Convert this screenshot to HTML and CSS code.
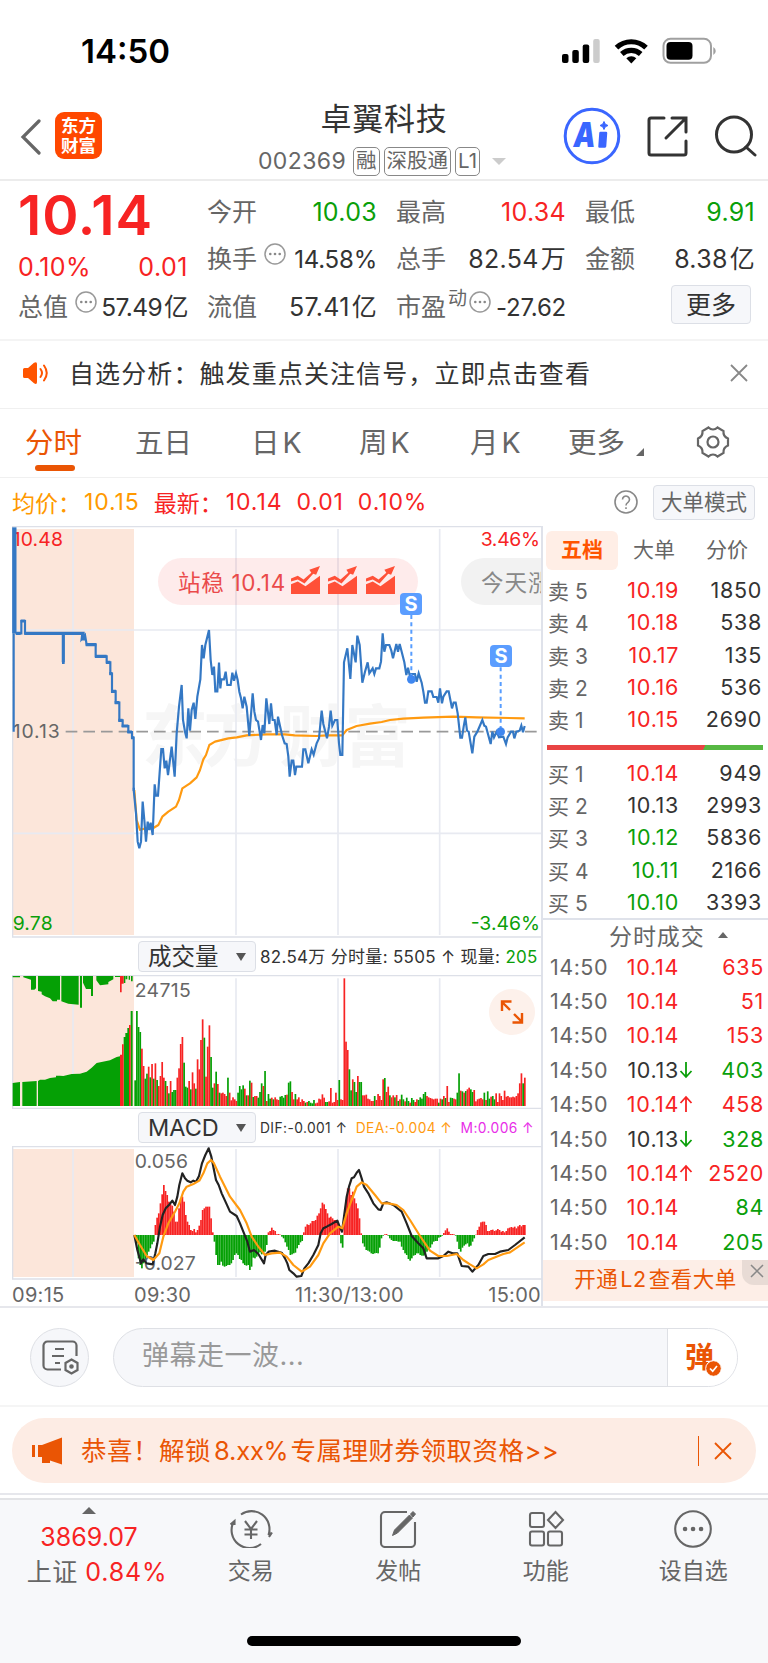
FILE: index.html
```html
<!DOCTYPE html>
<html lang="zh-CN">
<head>
    <meta charset="UTF-8">
    <meta name="viewport" content="width=device-width, initial-scale=1.0">
    <title>卓翼科技 002369</title>
    <link rel="stylesheet" href="styles.css">
</head>
<body>
    <div class="status-bar">
        <span class="clock">14:50</span>
        <svg class="status-icons" width="156" height="28" viewBox="561 37 156 28">
            <rect x="562" y="54" width="6.500" height="9" rx="2"/>
            <rect x="572.300" y="50" width="6.500" height="13" rx="2"/>
            <rect x="582.700" y="44.500" width="6.500" height="18.500" rx="2"/>
            <rect x="593.200" y="39" width="6.500" height="24" rx="2" fill="#ccc"/>
            <g fill="none" stroke="#000" stroke-width="5.200">
                <path d="M616.500 47.600a21.500 21.500 0 0 1 29.500 0"/>
                <path d="M621.800 54a14 14 0 0 1 18.900 0"/>
            </g>
            <path d="M626.300 58.200a7.500 7.500 0 0 1 10 0l-5 5.300z"/>
            <rect x="663.500" y="38.800" width="47.500" height="24" rx="7" fill="none" stroke="#a0a0a0" stroke-width="2"/>
            <rect x="666.500" y="42" width="26" height="17.800" rx="4"/>
            <path d="M713.300 47a4.500 4.500 0 0 1 0 8z" fill="#a0a0a0"/>
        </svg>
    </div>

    <header class="top-bar">
        <svg class="back" width="22" height="36" viewBox="0 0 22 36"><path d="M19 2 3 18l16 16"/></svg>
        <div class="logo"><span>东方</span><span>财富</span></div>
        <div class="stock">
            <h1>卓翼科技</h1>
            <div class="stock-code">
                <span class="code">002369</span>
                <span class="tag">融</span>
                <span class="tag">深股通</span>
                <span class="tag">L1</span>
                <i class="caret"></i>
            </div>
        </div>
        <div class="top-actions">
            <svg width="58" height="58" viewBox="0 0 58 58">
                <circle cx="29" cy="29" r="26.800" fill="none" stroke="#3a66ff" stroke-width="3"/>
                <text class="ai" x="10.500" y="40" textLength="22" lengthAdjust="spacingAndGlyphs">A</text>
                <path d="M37.500 26h5.500l-1 13.500h-5.500z" fill="#3a66ff" stroke="#3a66ff" stroke-width="2.500" stroke-linejoin="round"/>
                <path d="M41 14.500l1.300 2.700 2.700 1.300-2.700 1.300-1.300 2.700-1.300-2.700-2.700-1.300 2.700-1.300z" fill="#3a66ff" stroke="#3a66ff"/>
            </svg>
            <svg class="share" width="42" height="42" viewBox="0 0 42 42"><path d="M17 3H4a2 2 0 0 0-2 2v33a2 2 0 0 0 2 2h33a2 2 0 0 0 2-2V26M25 3h14v14M39 3 19 23"/></svg>
            <svg class="search" width="42" height="42" viewBox="0 0 42 42"><circle cx="19" cy="19.500" r="17.500"/><path d="m31 32 9 8"/></svg>
        </div>
    </header>

    <section class="quote">
        <div class="quote-main">
            <div class="last red">10.14</div>
            <div class="cell change red"><span>0.10%</span><b>0.01</b></div>
            <div class="cell"><span>总值</span><svg class="info" viewBox="0 0 22 22"><use href="#dots"/></svg><b>57.49<em>亿</em></b></div>
        </div>
        <div class="quote-col">
            <div class="cell"><span>今开</span><b class="green">10.03</b></div>
            <div class="cell"><span>换手</span><svg class="info" viewBox="0 0 22 22"><use href="#dots"/></svg><b class="tight">14.58%</b></div>
            <div class="cell"><span>流值</span><b>57.41<em>亿</em></b></div>
        </div>
        <div class="quote-col">
            <div class="cell"><span>最高</span><b class="red">10.34</b></div>
            <div class="cell"><span>总手</span><b>82.54<em>万</em></b></div>
            <div class="cell pe"><span>市盈</span><sup>动</sup><svg class="info" viewBox="0 0 22 22"><use href="#dots"/></svg><b class="tight">-27.62</b></div>
        </div>
        <div class="quote-col">
            <div class="cell"><span>最低</span><b class="green">9.91</b></div>
            <div class="cell"><span>金额</span><b>8.38<em>亿</em></b></div>
            <div class="cell"><button class="more">更多</button></div>
        </div>
    </section>

    <div class="signal">
        <svg width="28" height="24" viewBox="0 0 28 24">
            <path d="M1 8.500Q1 7 2.500 7H6l6-5.200Q15 0 15 3v18q0 3-3 1.200L6 17H2.500Q1 17 1 15.500z" fill="#ff5500"/>
            <path d="M18.500 8q3 4 0 8M22 4.500q5.500 7.500 0 15" fill="none" stroke="#ff5500" stroke-width="2" stroke-linecap="round"/>
        </svg>
        <p>自选分析：触发重点关注信号，立即点击查看</p>
        <svg class="close" width="18" height="18" viewBox="0 0 18 18"><path d="m1 1 16 16M17 1 1 17"/></svg>
    </div>

    <nav class="periods">
        <a class="on">分时</a>
        <a>五日</a>
        <a>日<i>K</i></a>
        <a>周<i>K</i></a>
        <a>月<i>K</i></a>
        <a class="period-more">更多</a>
        <svg width="34" height="34" viewBox="0 0 34 34">
            <path d="M12.500 2.500q2 2 4.500 2t4.500-2l6 3.500q-.6 5.500 4.500 7.500v7q-5 2-4.500 7.500l-6 3.500q-2-2-4.500-2t-4.500 2l-6-3.500q.5-5.500-4.500-7.500v-7q5-2 4.500-7.500z"/>
            <circle cx="17" cy="17" r="5.500"/>
        </svg>
    </nav>

    <div class="avg-line">
        <span class="orange">均价：</span><span class="orange num">10.15</span>
        <span class="red">最新：</span><span class="red num">10.14</span><span class="red num">0.01</span><span class="red num">0.10%</span>
        <svg class="help" width="24" height="24" viewBox="0 0 24 24"><circle cx="12" cy="12" r="11"/><path d="M8.500 9.500a3.500 3.500 0 1 1 5.500 2.900q-2 1.300-2 3"/><path d="M12 17.300v1.800"/></svg>
        <button class="mode">大单模式</button>
    </div>

    <main class="board">
        <div class="charts">
            <div class="price-chart">
                <svg width="530" height="412" viewBox="36 18 1590 1236">
                    <rect class="auction" x="38" y="27" width="364" height="1218"/>
                    <text class="watermark" x="425" y="722" textLength="385">东方</text>
                    <text class="watermark" x="838" y="722" textLength="395">财富</text>
                    <path class="grid" d="M219 27V1245M708 27V1245M1014 27V1245M1319 27V1245M38 330H1625M38 940H1625"/>
                    <path class="frame" d="M36 20H1626M38 20V1252M36 1251H1626"/>
                    <path class="base" d="M197 635H1615"/>
                    <text class="axis red" x="38" y="77" textLength="151">10.48</text>
                    <text class="axis" x="38" y="654" textLength="141">10.13</text>
                    <text class="axis green" x="38" y="1229" textLength="120">9.78</text>
                    <text class="axis red" x="1442" y="77" textLength="178">3.46%</text>
                    <text class="axis green" x="1412" y="1229" textLength="208">-3.46%</text>
                    <path class="avg" d="M403 810L410 900 420 930 437 925 460 924 475 915 487 890 505 875 528 860 537 840 547 805 570 790 590 772 600 750 610 718 618 705 628 675 645 665 685 655 710 652 740 646 800 643 854 643 884 646 950 648 980 646 1027 646 1040 630 1070 618 1110 611 1145 606 1170 600 1210 596 1270 593 1360 590 1430 592 1574 595"/>
                    <path class="price" d="M41 340V635M46 340H64V303H75V340H247L245 357 255 345 260 374H287V409H320V427H331V461H336V514H347V548H358V601H368V618H385V636H396V653H401V808L408 880 413 965 418 985 423 965 428 845 433 900 438 965 443 905 448 930 452 908 458 945 464 793 468 827 474 827 484 687 489 687 494 745 499 722 504 765 515 680 524 770 530 640 537 560 545 495 549 600 555 635 560 655 565 565 570 632 575 570 581 548 586 597 592 530 601 478 606 375 611 415 616 375 627 330 632 420 637 465 642 440 646 514 652 514 657 428 661 505 664 478 672 478 677 455 682 495 692 495 697 458 702 482 708 460 713 480 718 515 723 535 728 565 733 530 740 560 748 648 758 520 763 575 768 600 774 605 783 660 788 615 793 640 799 535 808 612 813 550 818 600 824 600 830 645 834 590 840 618 846 645 854 670 860 672 865 710 869 770 875 722 880 722 885 765 889 740 906 740 910 688 916 688 925 730 935 688 941 704 950 670 957 655 965 572 970 612 981 655 987 620 992 572 997 617 1005 600 1012 600 1017 670 1021 705 1027 705 1032 427 1042 385 1051 477 1057 375 1067 427 1072 347 1079 375 1087 488 1095 455 1103 427 1108 460 1118 445 1123 462 1128 445 1138 445 1143 425 1148 340 1153 395 1158 375 1168 375 1174 392 1179 415 1189 372 1194 395 1199 372 1205 395 1213 427 1219 465 1224 443 1230 470 1234 462 1245 462 1250 485 1256 460 1265 488 1270 515 1275 548 1280 548 1285 514 1295 514 1300 531 1310 531 1315 548 1320 505 1326 550 1330 530 1340 514 1346 514 1356 565 1361 548 1367 548 1373 580 1381 653 1386 653 1391 620 1396 592 1401 632 1406 635 1417 700 1423 650 1432 635 1447 600 1453 617 1458 620 1472 672 1477 635 1482 652 1490 635 1497 652 1510 650 1518 672 1523 652 1533 635 1539 635 1543 655 1549 635 1559 632 1564 617 1569 637 1574 618"/>
                    <path class="steps" d="M48 340H62M62 303H76M73 340H254M244 357H256M257 374H289M285 409H320M318 427H331M328 461H337M333 514H348M344 548H358M355 601H368M365 618H385M382 636H396M393 653H401M398 808H405M190 340V427M186 427H194"/>
                    <path class="opening" d="M43 22V340"/>
                    <g class="sell">
                        <path d="M1234 285V478M1502 442V635"/>
                        <circle cx="1234" cy="478" r="13"/>
                        <circle cx="1502" cy="635" r="13"/>
                    </g>
                </svg>
                <div class="bubble hot">站稳 10.14
                    <svg viewBox="0 0 30 30"><use href="#rise"/></svg><svg viewBox="0 0 30 30"><use href="#rise"/></svg><svg viewBox="0 0 30 30"><use href="#rise"/></svg>
                </div>
                <div class="bubble next">今天涨</div>
                <span class="mark mark-a">S</span>
                <span class="mark mark-b">S</span>
            </div>

            <div class="sub-head">
                <button>成交量<i></i></button>
                <p class="vol-text">82.54万 分时量: 5505 ↑ 现量: <span class="green">205</span></p>
            </div>
            <div class="sub-chart volume">
                <svg width="530" height="134" viewBox="36 134 1590 402">
                    <rect class="auction" x="38" y="137" width="364" height="390"/>
                    <path class="grid" d="M219 137V527M708 144V527M1014 144V527M1319 144V527"/>
                    <path class="frame" d="M36 136H1626M38 136V534M36 534H1626"/>
                    <path class="fill-green" d="M38 527V458L60 455V527zM67 527V455L110 452V527zM114 527V452L120 448 135 448 150 443 168 441V436H179L190 437 215 431 240 430 260 424 275 412 290 398 330 390 350 380 360 378V527zM371 527V320H376V308H382V293H387V527zM392 527V242H398V527z"/>
                    <path class="fill-green" d="M38 137H60V141H38zM70 137H108V174L103 178H93V148L70 141zM114 137H180V208H171V213H158L150 204 135 198 125 192V184L114 182zM184 137H236V223L205 220 184 213zM240 137H246V232H240zM249 137H279V197H273V176H258L249 157zM289 137H340V147L325 155V162L300 165 289 150zM345 137H360V140H345zM371 137H376V158H371zM377 137H382V147H377zM386 137H390V148H386zM393 137H398V153H393z"/>
                    <path class="fill-red" d="M360 527V373H366V342H371V527zM387 527V284H392V527zM360 137H371V160H365V186H360z"/>
                    <g id="volume"></g>
                    <text class="axis" x="404" y="200" textLength="168">24715</text>
                </svg>
                <svg class="expand" viewBox="0 0 46 46"><circle cx="23" cy="23" r="23"/><path d="M21 21 13 13M13 22v-9.500h9.500M25 25l8 8M33 24v9.500h-9.500"/></svg>
            </div>

            <div class="sub-head macd-head">
                <button>MACD<i></i></button>
                <p class="macd-text"><span>DIF:-0.001 ↑</span><span class="dea">DEA:-0.004 ↑</span><span class="m">M:0.006 ↑</span></p>
            </div>
            <div class="sub-chart">
                <svg width="530" height="134" viewBox="36 648 1590 402">
                    <rect class="auction" x="38" y="657" width="364" height="384"/>
                    <path class="grid" d="M219 657V1041M708 657V1041M1014 657V1041M1319 657V1041"/>
                    <path class="frame" d="M36 650H1626M38 650V1047M36 1047H1626"/>
                    <text class="axis" x="404" y="714" textLength="160">0.056</text>
                    <g id="macd"></g>
                    <text class="axis" x="404" y="1021" textLength="183">-0.027</text>
                    <path class="dif" d="M403 915L412 960 423 1000 430 988 440 1000 458 1003 466 970 472 940 480 890 488 855 497 835 507 825 517 812 525 825 532 800 538 765 547 730 555 745 562 752 572 757 580 752 588 755 597 738 606 700 616 675 626 655 634 680 640 710 648 750 656 765 665 790 675 812 690 845 710 858 720 880 732 910 742 935 750 965 762 960 775 972 792 1000 797 975 806 965 825 962 845 968 855 985 862 1000 868 1020 880 1030 890 1040 904 1038 913 1015 925 1000 940 975 955 945 962 910 970 895 980 890 995 882 1012 872 1018 888 1026 905 1032 860 1040 800 1047 770 1055 745 1062 742 1070 728 1077 720 1085 745 1092 770 1105 790 1120 820 1135 838 1142 840 1150 820 1160 817 1180 825 1205 845 1220 880 1235 918 1255 940 1270 955 1280 985 1315 985 1330 978 1345 965 1358 970 1372 970 1385 1008 1405 1010 1417 1025 1435 1005 1450 978 1465 972 1485 972 1500 965 1525 960 1545 945 1574 922"/>
                    <path class="avg" d="M403 915L420 945 440 978 460 990 478 970 490 920 505 880 525 845 538 820 550 785 560 770 580 762 598 752 610 730 622 700 633 690 642 700 660 740 690 800 720 840 740 880 755 920 775 950 795 975 815 970 840 968 860 980 880 1005 905 1025 930 1010 955 975 970 940 990 910 1015 890 1027 895 1040 850 1055 810 1070 770 1085 757 1100 765 1125 795 1145 820 1165 820 1190 825 1210 840 1230 870 1260 918 1290 962 1315 978 1340 978 1370 972 1390 990 1410 1003 1430 1015 1450 1003 1465 990 1510 972 1530 967 1574 937"/>
                </svg>
            </div>
            <div class="times"><span>09:15</span><span>09:30</span><span>11:30/13:00</span><span>15:00</span></div>
        </div>

        <aside class="depth">
            <div class="depth-tabs"><b>五档</b><span>大单</span><span>分价</span></div>
            <div class="levels">
                <div class="row"><span>卖 5</span><b class="red">10.19</b><em>1850</em></div>
                <div class="row"><span>卖 4</span><b class="red">10.18</b><em>538</em></div>
                <div class="row"><span>卖 3</span><b class="red">10.17</b><em>135</em></div>
                <div class="row"><span>卖 2</span><b class="red">10.16</b><em>536</em></div>
                <div class="row"><span>卖 1</span><b class="red">10.15</b><em>2690</em></div>
            </div>
            <div class="ratio"></div>
            <div class="levels buy">
                <div class="row"><span>买 1</span><b class="red">10.14</b><em>949</em></div>
                <div class="row"><span>买 2</span><b>10.13</b><em>2993</em></div>
                <div class="row"><span>买 3</span><b class="green">10.12</b><em>5836</em></div>
                <div class="row"><span>买 4</span><b class="green">10.11</b><em>2166</em></div>
                <div class="row"><span>买 5</span><b class="green">10.10</b><em>3393</em></div>
            </div>
            <h2>分时成交<i></i></h2>
            <div class="trades">
                <div class="row"><span>14:50</span><b class="red">10.14</b><em class="red">635</em></div>
                <div class="row"><span>14:50</span><b class="red">10.14</b><em class="red">51</em></div>
                <div class="row"><span>14:50</span><b class="red">10.14</b><em class="red">153</em></div>
                <div class="row"><span>14:50</span><b>10.13</b><svg class="arrow green" viewBox="0 0 14 18"><use href="#down"/></svg><em class="green">403</em></div>
                <div class="row"><span>14:50</span><b class="red">10.14</b><svg class="arrow red" viewBox="0 0 14 18"><use href="#up"/></svg><em class="red">458</em></div>
                <div class="row"><span>14:50</span><b>10.13</b><svg class="arrow green" viewBox="0 0 14 18"><use href="#down"/></svg><em class="green">328</em></div>
                <div class="row"><span>14:50</span><b class="red">10.14</b><svg class="arrow red" viewBox="0 0 14 18"><use href="#up"/></svg><em class="red">2520</em></div>
                <div class="row"><span>14:50</span><b class="red">10.14</b><em class="green">84</em></div>
                <div class="row"><span>14:50</span><b class="red">10.14</b><em class="green">205</em></div>
            </div>
            <div class="l2">开通<i>L2</i>查看大单<span class="l2-close"><svg width="14" height="14" viewBox="0 0 14 14"><path d="m1 1 12 12M13 1 1 13"/></svg></span></div>
        </aside>
    </main>

    <div class="comment">
        <div class="comment-set">
            <svg width="38" height="36" viewBox="0 0 38 36">
                <path d="M20 30.500H6.500a4 4 0 0 1-4-4V6.500a4 4 0 0 1 4-4h25a4 4 0 0 1 4 4V17M14 10h9M11 17h12M14 24h5"/>
                <path d="m30.500 20.500 6 3.500v7l-6 3.500-6-3.500v-7z"/>
                <circle cx="30.500" cy="27.500" r="1.200"/>
            </svg>
        </div>
        <div class="comment-box">
            <span class="placeholder">弹幕走一波...</span>
            <div class="danmu"><b>弹</b><svg width="17" height="17" viewBox="-1 -1 17 17"><circle cx="7.500" cy="7.500" r="7.800" stroke="#fff"/><path d="m4 7.500 2.700 2.700L11 5"/></svg></div>
        </div>
    </div>

    <div class="promo-wrap">
        <div class="promo">
            <svg width="32" height="28" viewBox="0 0 32 28"><path d="M0 8h3v12H0zM6 8h4L30 0.500V27.500L18 23.500V26H10V20H6z"/></svg>
            <p>恭喜！解锁<i>8.xx%</i>专属理财券领取资格&gt;&gt;</p>
            <svg class="promo-close" width="18" height="18" viewBox="0 0 18 18"><path d="m1 1 16 16M17 1 1 17"/></svg>
        </div>
    </div>

    <footer class="bottom-nav">
        <div class="index">
            <i></i>
            <b class="red">3869.07</b>
            <span>上证 <em class="red">0.84%</em></span>
        </div>
        <div class="nav-item">
            <svg viewBox="0 0 44 38"><path d="M12 4.500A18 18 0 0 1 39.500 25M40.500 25.500v-4M40 27l3-4.500M32 34A18 18 0 0 1 4.500 12M1.500 14.500l4-3.500v4M16 11l6 8 6-8M22 19v10M15.500 19.500h13M15.500 24.500h13"/></svg>
            <span>交易</span>
        </div>
        <div class="nav-item">
            <svg viewBox="0 0 44 38"><path d="M31 2H9a4 4 0 0 0-4 4v27a4 4 0 0 0 4 4h26a4 4 0 0 0 4-4V12"/><path class="solid" d="m16.500 25.500 2-5.500L33.500 5l3 3L21.500 23zM34.500 4l2.500-2.500 2.500 2.500L37 7z"/></svg>
            <span>发帖</span>
        </div>
        <div class="nav-item">
            <svg viewBox="0 0 44 38"><rect x="6" y="3" width="14" height="14" rx="2"/><rect x="6" y="21.500" width="14" height="14" rx="2"/><rect x="24" y="21.500" width="14" height="14" rx="2"/><path d="m31.500 2 7.500 8-7.500 8-7.500-8z"/></svg>
            <span>功能</span>
        </div>
        <div class="nav-item">
            <svg viewBox="0 0 44 38"><circle cx="22" cy="19" r="17.800"/><path class="solid" d="M14 19h.1M22 19h.1M30 19h.1"/></svg>
            <span>设自选</span>
        </div>
        <div class="home-bar"></div>
    </footer>

    <svg class="defs">
        <symbol id="dots" viewBox="0 0 22 22"><circle cx="11" cy="11" r="10" fill="none" stroke="#999" stroke-width="1.500"/><circle cx="6.300" cy="11" r="1.300" fill="#888"/><circle cx="11" cy="11" r="1.300" fill="#888"/><circle cx="15.700" cy="11" r="1.300" fill="#888"/></symbol>
        <symbol id="rise" viewBox="0 0 30 30"><path d="M0 13 7 10l6 4 8-7-2-3 11-4-4 9-3-1-9 10-7-4L0 16z"/><path d="M0 19l7-3 8 5L30 10v19H0z"/></symbol>
        <symbol id="up" viewBox="0 0 14 18"><path d="M7 17V2M1.500 8 7 2l5.500 6"/></symbol>
        <symbol id="down" viewBox="0 0 14 18"><path d="M7 1v15M1.500 10 7 16l5.500-6"/></symbol>
    </svg>
    <script src="chart.js"></script>
</body>
</html>
```

FILE: styles.css
```css
* {
    box-sizing: border-box;
}
body {
    margin: 0;
    width: 768px;
    height: 1663px;
    overflow: hidden;
    background: #fff;
    color: #333;
    font-family: Inter, "Noto Sans CJK SC", sans-serif;
}
h1, h2, p {
    margin: 0;
    font-weight: 400;
}
b, i, em {
    font-weight: 400;
    font-style: normal;
}
button {
    padding: 0;
    border: 1px solid #dcdfe6;
    border-radius: 4px;
    background: #f6f7fa;
    color: #333;
    font-family: inherit;
}
svg {
    display: block;
    flex: none;
}
.defs {
    display: none;
}
.red {
    color: #f72323;
    fill: #f72323;
}
.green {
    color: #0a9f0a;
    fill: #0a9f0a;
}
.orange {
    color: #ff9900;
}

/* status bar */
.status-bar {
    height: 102px;
    padding: 0 51px 0 81px;
    display: flex;
    align-items: center;
    justify-content: space-between;
}
.clock {
    font-size: 33px;
    font-weight: 600;
    color: #000;
    letter-spacing: 0;
}

/* header */
.top-bar {
    height: 79px;
    padding: 0 11px 0 20px;
    display: grid;
    grid-template-columns: 35px 166px 326px 1fr;
    border-bottom: 2px solid #ececec;
}
.back {
    margin-top: 17px;
    fill: none;
    stroke: #666;
    stroke-width: 3.2;
    stroke-linecap: round;
}
.logo {
    width: 47px;
    height: 47px;
    margin-top: 10px;
    padding-top: 4px;
    border-radius: 9px;
    background: #ff4800;
    color: #fff;
    font-size: 17.5px;
    font-weight: 700;
    line-height: 19.5px;
    text-align: center;
}
.logo span {
    display: block;
}
.stock {
    display: flex;
    flex-direction: column;
    align-items: center;
}
.stock h1 {
    font-size: 31px;
    line-height: 34px;
    letter-spacing: 0.7px;
}
.stock-code {
    display: flex;
    align-items: center;
    margin: 10px 0 0 -4px;
    height: 30px;
    color: #666;
}
.code {
    font-size: 23px;
    letter-spacing: 0.4px;
    margin-right: 7px;
}
.tag {
    height: 29px;
    margin-right: 4px;
    padding: 0 2px;
    border: 1.5px solid #888;
    border-radius: 5px;
    font-size: 20.5px;
    line-height: 26px;
}
.caret {
    margin-left: 8px;
    border: 7px solid transparent;
    border-top: 7px solid #ccc;
    border-bottom: 0;
}
.top-actions {
    display: flex;
    justify-content: flex-end;
    margin-top: 5px;
    height: 58px;
}
.ai {
    font: italic 900 34px Inter, sans-serif;
    fill: #3a66ff;
}
.share, .search {
    margin: 8px 0 0 26px;
    fill: none;
    stroke: #333;
    stroke-width: 3;
    stroke-linecap: round;
}

/* quote */
.quote {
    height: 160px;
    padding: 7px 12px 0 18px;
    display: grid;
    grid-template-columns: repeat(4, 170px);
    column-gap: 19px;
    border-bottom: 2px solid #f4f4f4;
}
.cell {
    height: 47.5px;
    display: flex;
    align-items: center;
    font-size: 25px;
    line-height: 36px;
    color: #666;
}
.cell b {
    margin-left: auto;
    color: #333;
    white-space: nowrap;
}
.cell b.red, .change.red, .change b {
    color: #f72323;
}
.cell b.green {
    color: #0a9f0a;
}
.cell em {
    margin-left: 2px;
}
.last {
    height: 54px;
    line-height: 54px;
    font-size: 55px;
    font-weight: 600;
    letter-spacing: 0.9px;
}
.change {
    height: 48px;
    padding-top: 1px;
    letter-spacing: 0.5px;
}
.quote-main .cell:last-child {
    height: 34px;
}
.quote-col .cell b {
    letter-spacing: 0.3px;
}
.quote-col .cell b.tight {
    font-size: 24px;
    letter-spacing: -0.2px;
    padding-top: 2px;
}
.quote-main .cell:last-child b {
    font-size: 24.5px;
    letter-spacing: -0.6px;
}
.info {
    width: 22px;
    height: 22px;
    margin: -10px 0 0 7px;
}
.pe sup {
    font-size: 19px;
    line-height: 20px;
    margin: -16px 0 0 2px;
}
.pe .info {
    margin-left: 2px;
}
.more {
    width: 80px;
    height: 39px;
    margin: -4px 4px 0 auto;
    font-size: 25px;
    line-height: 34px;
}

/* signal strip */
.signal {
    height: 68px;
    padding: 0 20px 4px 22px;
    display: flex;
    align-items: center;
    border-bottom: 1px solid #f0f0f0;
}
.signal p {
    margin-left: 19px;
    margin-top: -2px;
    font-size: 25px;
    letter-spacing: 1.1px;
    flex: 1;
}
.close {
    fill: none;
    stroke: #888;
    stroke-width: 1.8;
}

/* period tabs */
.periods {
    height: 69px;
    padding-left: 25px;
    display: grid;
    grid-template-columns: 110px 116px 108px 111px 98px 128px 40px;
    border-bottom: 1px solid #f0f0f0;
    font-size: 28.5px;
    line-height: 67px;
    color: #666;
}
.periods a {
    position: relative;
    white-space: nowrap;
}
.periods i {
    margin-left: 3px;
}
.periods .on {
    color: #ea5504;
}
.periods .on::after {
    content: "";
    position: absolute;
    left: 10px;
    top: 56px;
    width: 40px;
    height: 6px;
    border-radius: 3px;
    background: #ea5504;
}
.period-more::after {
    content: "";
    position: absolute;
    left: 68px;
    top: 39px;
    border: 4.5px solid transparent;
    border-right-color: #666;
    border-bottom-color: #666;
}
.periods svg {
    margin-top: 16px;
    fill: none;
    stroke: #666;
    stroke-width: 2.2;
}

/* average price line */
.avg-line {
    height: 48px;
    padding: 0 13px 0 12px;
    display: flex;
    align-items: center;
    font-size: 23px;
}
.avg-line .num {
    margin-right: 14px;
    letter-spacing: 0.9px;
}
.avg-line span {
    white-space: nowrap;
}
.avg-line .orange:first-child, .avg-line .red:nth-child(3) {
    width: 72px;
}
.help {
    margin-left: auto;
    fill: none;
    stroke: #888;
    stroke-width: 1.6;
}
.mode {
    width: 102px;
    height: 35px;
    margin-left: 15px;
    font-size: 21.5px;
    line-height: 30px;
    color: #666;
}

/* charts */
.board {
    display: flex;
    height: 782px;
    border-bottom: 2px solid #e6e7ec;
}
.charts {
    width: 531px;
    margin-left: 12px;
    border-right: 2px solid #dfe2ea;
}
.price-chart {
    position: relative;
    height: 412px;
    overflow: hidden;
}
.auction {
    fill: #fce6da;
}
.grid, .frame, .base, .avg, .price, .steps, .opening, .dif {
    fill: none;
}
.grid {
    stroke: #e8eaf1;
    stroke-width: 5;
}
.frame {
    stroke: #dde0e8;
    stroke-width: 4;
}
.base {
    stroke: #999;
    stroke-width: 5;
    stroke-dasharray: 35 18;
}
.axis {
    font-size: 58px;
    fill: #666;
}
.axis.red {
    fill: #f72323;
}
.axis.green {
    fill: #0a9f0a;
}
.watermark {
    font-size: 200px;
    font-weight: 700;
    fill: #f6f6f6;
}
.avg {
    stroke: #ff9a10;
    stroke-width: 6.5;
    stroke-linejoin: round;
}
.price {
    stroke: #3478c4;
    stroke-width: 6.5;
}
.steps {
    stroke: #3478c4;
    stroke-width: 9.5;
}
.opening {
    stroke: #3478c4;
    stroke-width: 13;
}
.dif {
    stroke: #222;
    stroke-width: 6.5;
    stroke-linejoin: round;
}
.sell path {
    stroke: #579dff;
    stroke-width: 6;
    stroke-dasharray: 12 10;
}
.sell circle {
    fill: #3f87f0;
}
.bubble {
    position: absolute;
    top: 32px;
    height: 47px;
    padding-bottom: 2px;
    border-radius: 24px;
    display: flex;
    align-items: center;
    font-size: 22.5px;
    white-space: nowrap;
}
.hot {
    left: 146px;
    width: 260px;
    padding-left: 20px;
    background: rgba(247, 35, 35, 0.09);
    color: #ea4a4a;
    letter-spacing: 0.7px;
}
.hot svg {
    width: 31px;
    height: 29px;
    margin: 0 0 0 6.5px;
    fill: #ff5038;
}
.hot svg:first-child {
    margin-left: 4px;
}
.next {
    left: 449px;
    width: 110px;
    padding-left: 20px;
    background: #f2f2f2;
    color: #888;
    letter-spacing: 1px;
}
.mark {
    position: absolute;
    width: 22px;
    height: 22px;
    border-radius: 4px;
    background: #5b9dff;
    color: #fff;
    font-size: 20px;
    font-weight: 700;
    line-height: 22px;
    text-align: center;
}
.mark-a {
    left: 388px;
    top: 67px;
}
.mark-b {
    left: 478px;
    top: 119px;
}
.sub-head {
    height: 37px;
    padding: 1px 0 1px 126px;
    display: flex;
    align-items: center;
}
.sub-head button {
    width: 118px;
    height: 31px;
    padding: 0 9px;
    display: flex;
    align-items: center;
    justify-content: space-between;
    font-size: 23.5px;
    line-height: 28px;
}
.sub-head i {
    border: 5px solid transparent;
    border-top: 8px solid #555;
    border-bottom: 0;
}
.sub-head p {
    flex: 1;
    margin-left: 4px;
    white-space: nowrap;
}
.vol-text {
    font-size: 17px;
    letter-spacing: 0.3px;
    margin-top: -3px;
}
.macd-text {
    display: flex;
    justify-content: space-between;
    padding-right: 7px;
    font-size: 13.8px;
    letter-spacing: 0.4px;
}
.dea {
    color: #ff9a10;
}
.m {
    color: #e82ee8;
}
.sub-chart {
    position: relative;
    height: 134px;
}
.expand {
    position: absolute;
    right: 6px;
    top: 14px;
    width: 46px;
    height: 46px;
}
.expand circle {
    fill: #fdf1eb;
}
.expand path {
    fill: none;
    stroke: #ea5504;
    stroke-width: 2.4;
}
.fill-red {
    fill: #f72323;
}
.fill-green {
    fill: #05a005;
}
.times {
    display: flex;
    font-size: 20px;
    line-height: 30px;
    color: #666;
    letter-spacing: 0.3px;
}
.times span:nth-child(1) {
    width: 122px;
}
.times span:nth-child(2) {
    width: 161px;
}
.times span:nth-child(4) {
    margin-left: auto;
}

/* order book */
.depth {
    flex: 1;
}
.depth-tabs {
    display: flex;
    margin-top: 5px;
    padding-left: 3px;
    line-height: 38px;
    font-size: 21px;
    color: #666;
}
.depth-tabs b {
    width: 72px;
    height: 39px;
    border-radius: 6px;
    background: #ffeee6;
    color: #ff5500;
    font-weight: 700;
    text-align: center;
}
.depth-tabs span {
    margin-left: 15px;
    width: 58px;
}
.levels {
    padding-top: 4px;
}
.row {
    height: 32.3px;
    padding: 0 6px 0 5px;
    display: flex;
    align-items: center;
    font-size: 21.5px;
    letter-spacing: 0.7px;
    color: #333;
}
.row span {
    width: 75px;
    color: #666;
}
.levels span {
    font-size: 21px;
    letter-spacing: 0;
}
.row b {
    width: 56px;
    text-align: right;
    white-space: nowrap;
}
.row em {
    margin-left: auto;
}
.ratio {
    width: 216px;
    height: 5px;
    margin: 10px 0 0 4px;
    background: linear-gradient(120deg, #e94444 72.500%, #56b843 72.500%);
}
.buy {
    padding-top: 6px;
    border-bottom: 2px solid #dfe2ea;
}
.depth h2 {
    display: flex;
    align-items: center;
    height: 29.5px;
    padding-left: 66px;
    font-size: 23px;
    letter-spacing: 0.9px;
    color: #666;
}
.depth h2 i {
    margin-left: 13px;
    border: 5.5px solid transparent;
    border-bottom: 6.5px solid #666;
    border-top: 0;
}
.trades .row {
    height: 34.4px;
    padding: 0 4px 0 7px;
}
.trades span {
    width: 73px;
    letter-spacing: 0.5px;
}
.arrow {
    width: 14px;
    height: 18px;
    margin-left: 0;
    stroke: currentColor;
    stroke-width: 1.8;
    fill: none;
}
.arrow.red, .arrow.green {
    fill: none;
}
.l2 {
    position: relative;
    height: 41px;
    margin-top: 1.5px;
    background: #fdeee7;
    color: #ea5504;
    font-size: 21.5px;
    line-height: 38px;
    letter-spacing: 0.5px;
    text-align: center;
}
.l2 i {
    margin: 0 2px;
}
.l2-close {
    position: absolute;
    right: 0;
    top: 0;
    width: 26px;
    height: 25px;
    padding: 4px 0 0 8px;
    border-bottom-left-radius: 12px;
    background: #e8dbd5;
}
.l2-close path {
    stroke: #888;
    stroke-width: 1.5;
}

/* comment input */
.comment {
    height: 99px;
    padding: 1px 30px 0;
    display: flex;
    align-items: center;
    border-bottom: 2px solid #f5f5f5;
}
.comment-set {
    width: 59px;
    height: 59px;
    display: flex;
    align-items: center;
    justify-content: center;
    border: 1.5px solid #dee0e5;
    border-radius: 50%;
    background: #f6f7fa;
}
.comment-set path, .comment-set circle {
    fill: none;
    stroke: #666;
    stroke-width: 2.2;
}
.comment-box {
    width: 625px;
    height: 59px;
    margin-left: 24px;
    display: flex;
    justify-content: space-between;
    border: 1.5px solid #dee0e5;
    border-radius: 30px;
    background: #f6f7fa;
    overflow: hidden;
}
.placeholder {
    padding-left: 28px;
    font-size: 27px;
    line-height: 54px;
    color: #999;
    letter-spacing: 0.5px;
}
.danmu {
    position: relative;
    width: 70px;
    border-left: 1.5px solid #dee0e5;
    background: #fff;
    color: #ea5504;
}
.danmu b {
    display: block;
    padding-left: 17px;
    font-size: 29px;
    font-weight: 700;
    line-height: 57px;
}
.danmu svg {
    position: absolute;
    left: 37px;
    top: 31px;
    fill: #ea5504;
}
.danmu path {
    fill: none;
    stroke: #fff;
    stroke-width: 1.7;
}

/* promo banner */
.promo-wrap {
    height: 88px;
    padding: 11px 12px 0;
    border-bottom: 2px solid #e6e7ec;
}
.promo {
    height: 65px;
    padding: 0 24px 0 20px;
    display: flex;
    align-items: center;
    border-radius: 33px;
    background: #fdece4;
    color: #ea5504;
}
.promo svg {
    fill: #ea5504;
}
.promo p {
    flex: 1;
    margin: -4px 0 0 17px;
    font-size: 25.5px;
    letter-spacing: 0.5px;
}
.promo i {
    margin: 0 2px 0 3px;
    letter-spacing: -0.2px;
}
.promo .promo-close {
    box-sizing: content-box;
    padding: 6px 0 6px 15px;
    border-left: 1.5px solid #ea5504;
    fill: none;
    stroke: #ea5504;
    stroke-width: 1.8;
}

/* bottom navigation */
.bottom-nav {
    position: relative;
    height: 165px;
    margin-top: 3px;
    padding: 7px 0 0 16px;
    display: grid;
    grid-template-columns: 161px repeat(4, 147.500px);
    align-items: start;
    border-top: 2px solid #e2e3e6;
    background: #f7f8fa;
    color: #666;
    font-size: 23px;
}
.index {
    display: flex;
    flex-direction: column;
    align-items: center;
    width: 162px;
    font-size: 25px;
    white-space: nowrap;
}
.index i {
    margin-right: 16px;
    border: 7px solid transparent;
    border-bottom: 7px solid #666;
    border-top: 0;
}
.index b {
    margin: 4px 16px 0 0;
    line-height: 38px;
}
.index span {
    line-height: 32px;
    letter-spacing: 0.5px;
}
.index em {
    letter-spacing: 0.8px;
}
.nav-item {
    display: flex;
    flex-direction: column;
    align-items: center;
}
.nav-item svg {
    width: 44px;
    height: 38px;
    margin-top: 3px;
    fill: none;
    stroke: #666;
    stroke-width: 2.1;
}
.nav-item .solid {
    fill: #666;
    stroke-width: 1;
}
.nav-item circle + .solid {
    stroke-width: 4.5;
    stroke-linecap: round;
}
.nav-item span {
    margin-top: 7px;
    line-height: 32px;
}
.home-bar {
    position: absolute;
    left: 247px;
    bottom: 17px;
    width: 274px;
    height: 10px;
    border-radius: 5px;
    background: #000;
}
```

FILE: chart.js
```js
// one value per minute from 09:30, positive is red, negative is green
const volume = [
    -77, -285, -237, -222, 172, 120, -82, -97, 118, -86, 126, -82, 128, -78, 60, 90, 132, 85, -75, 60,
    -38, 75, -42, -48, -48, 85, 113, 186, 207, -130, -58, -55, 75, -50, 101, 68, -52, 140, 110, 198,
    260, -205, 88, 178, 242, -147, -55, 68, -103, 66, -40, 38, 40, 36, 30, -85, 40, 17, 26, 20,
    15, -40, -60, -50, -62, 52, -32, 32, -76, 70, -27, 30, 30, -25, -42, -68, 60, -105, 15, -36,
    -22, 25, -20, 26, 20, 18, -28, -30, -25, -33, 34, -70, -74, 42, 20, -36, 20, 26, 12, 20,
    15, -10, 12, -15, -10, -8, -18, 8, 10, 22, 20, 35, 25, -12, -12, 14, 54, 10, 12, 40,
    18, -78, 20, 18, 383, 193, 168, -110, -47, 80, -72, -42, 90, -72, -72, 32, 32, 34, 22, 20,
    15, 15, -30, 18, 36, 30, 18, 80, -84, 42, 58, -32, 26, 32, -26, 33, -15, 20, -34, -20,
    14, -25, -15, 10, -24, -18, 12, 20, -18, -26, -22, -36, -42, 30, 26, 24, 22, 20, 22, 22,
    -10, 22, -20, 30, -24, 60, 12, -25, -24, 22, 20, -40, -98, 46, -44, 40, -45, 50, 55, -50,
    -42, 48, 14, 20, 22, 24, 20, -40, 18, -44, -22, 28, -30, -20, 38, 12, 38, 30, 18, 46,
    28, 30, 26, 26, 28, 26, 30, 38, 68, 98, -68, 85
];

const macd = [
    -5, -25, -70, -90, -100, -85, -75, -60, -50, -40, -28, -20, 30, 52, 65, 95, 122, 150, 132, 120,
    100, 92, 88, 70, 40, 40, 80, 110, 115, 100, 60, 40, 30, 15, 12, 18, 8, 15, 28, 45,
    75, 80, 85, 85, 85, 50, 8, -20, -60, -90, -90, -80, -92, -95, -93, -90, -90, -85, -75, -60,
    -55, -60, -72, -75, -85, -90, -92, -90, -105, -95, -68, -70, -65, -55, -52, -58, -55, -50, -30, 8,
    12, 22, 15, 12, 2, 3, 1, -5, -10, -22, -35, -45, -60, -58, -55, -53, -40, -30, -22, -18,
    8, 25, 32, 30, 35, 42, 42, 45, 58, 65, 80, 97, 92, 78, 65, 52, 55, 50, 45, 45,
    40, 30, -25, -38, 60, 100, 140, 140, 120, 130, 110, 95, 80, 50, 5, -25, -35, -45, -47, -50,
    -55, -57, -55, -54, -55, -38, -10, -2, 2, 3, -2, -10, -15, -18, -18, -18, -20, -20, -35, -45,
    -55, -60, -72, -77, -70, -62, -60, -55, -55, -60, -62, -62, -60, -50, -45, -38, -28, -20, -18, -18,
    -8, -6, -2, 6, 14, 20, 10, 3, 3, 2, -2, -20, -42, -50, -38, -32, -28, -25, -35, -32,
    -20, -10, 1, 15, 25, 38, 40, 40, 30, 12, 12, 15, 16, 12, 14, 18, 15, 10, 12, 8,
    12, 20, 22, 24, 22, 25, 20, 26, 30, 26, 30, 30
];

function drawBars(id, data, zero, bothWays) {
    const step = 1174 / data.length;
    let html = "";
    data.forEach((v, i) => {
        const h = Math.abs(v);
        const y = bothWays && v < 0 ? zero : zero - h;
        html += `<rect class="${v < 0 ? "fill-green" : "fill-red"}" x="${(403 + i * step).toFixed(1)}" y="${y}" width="5.1" height="${h}"/>`;
    });
    document.getElementById(id).innerHTML = html;
}

drawBars("volume", volume, 527, false);
drawBars("macd", macd, 915, true);
```
